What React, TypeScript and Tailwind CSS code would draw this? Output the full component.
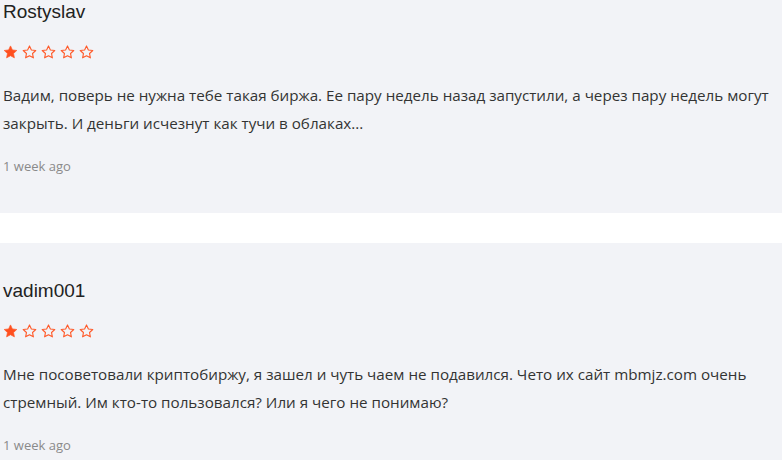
import React from 'react';

interface Review {
  name: string;
  rating: number;
  text: string;
  date: string;
}

const reviews: Review[] = [
  {
    name: 'Rostyslav',
    rating: 1,
    text: 'Вадим, поверь не нужна тебе такая биржа. Ее пару недель назад запустили, а через пару недель могут закрыть. И деньги исчезнут как тучи в облаках...',
    date: '1 week ago',
  },
  {
    name: 'vadim001',
    rating: 1,
    text: 'Мне посоветовали криптобиржу, я зашел и чуть чаем не подавился. Чето их сайт mbmjz.com очень стремный. Им кто-то пользовался? Или я чего не понимаю?',
    date: '1 week ago',
  },
];

function Star({ filled }: { filled: boolean }) {
  return (
    <svg width="15" height="14" viewBox="0 0 24 23" className="shrink-0">
      <path
        d="M12 1.5l3.1 6.6 7.2.9-5.3 5 1.4 7.1L12 17.6l-6.4 3.5 1.4-7.1-5.3-5 7.2-.9z"
        fill={filled ? '#ff4f1f' : 'none'}
        stroke="#ff5a2a"
        strokeWidth={filled ? 1.2 : 1.8}
        strokeLinejoin="round"
      />
    </svg>
  );
}

function ReviewCard({ review }: { review: Review }) {
  return (
    <div className="bg-[#f2f3f7] pl-[3px] pr-1 pt-[35px] pb-[37px]">
      <div className="text-[19px] leading-[25px] text-[#222] font-['Liberation_Sans',Arial,sans-serif]">
        {review.name}
      </div>
      <div className="mt-[21px] flex h-[14px] items-center gap-[4px]">
        {[1, 2, 3, 4, 5].map((i) => (
          <Star key={i} filled={i <= review.rating} />
        ))}
      </div>
      <p className="mt-[22px] text-[15.2px] leading-[28px] text-[#333] font-['Open_Sans',sans-serif]">
        {review.text}
      </p>
      <div className="mt-[19px] text-[13px] leading-[20px] text-[#8a8a8a] font-['Open_Sans',sans-serif]">
        {review.date}
      </div>
    </div>
  );
}

export default function App() {
  return (
    <div className="h-[460px] w-[782px] overflow-hidden bg-white">
      <div className="-mt-[36px] flex flex-col gap-[30px]">
        {reviews.map((r) => (
          <ReviewCard key={r.name} review={r} />
        ))}
      </div>
    </div>
  );
}
